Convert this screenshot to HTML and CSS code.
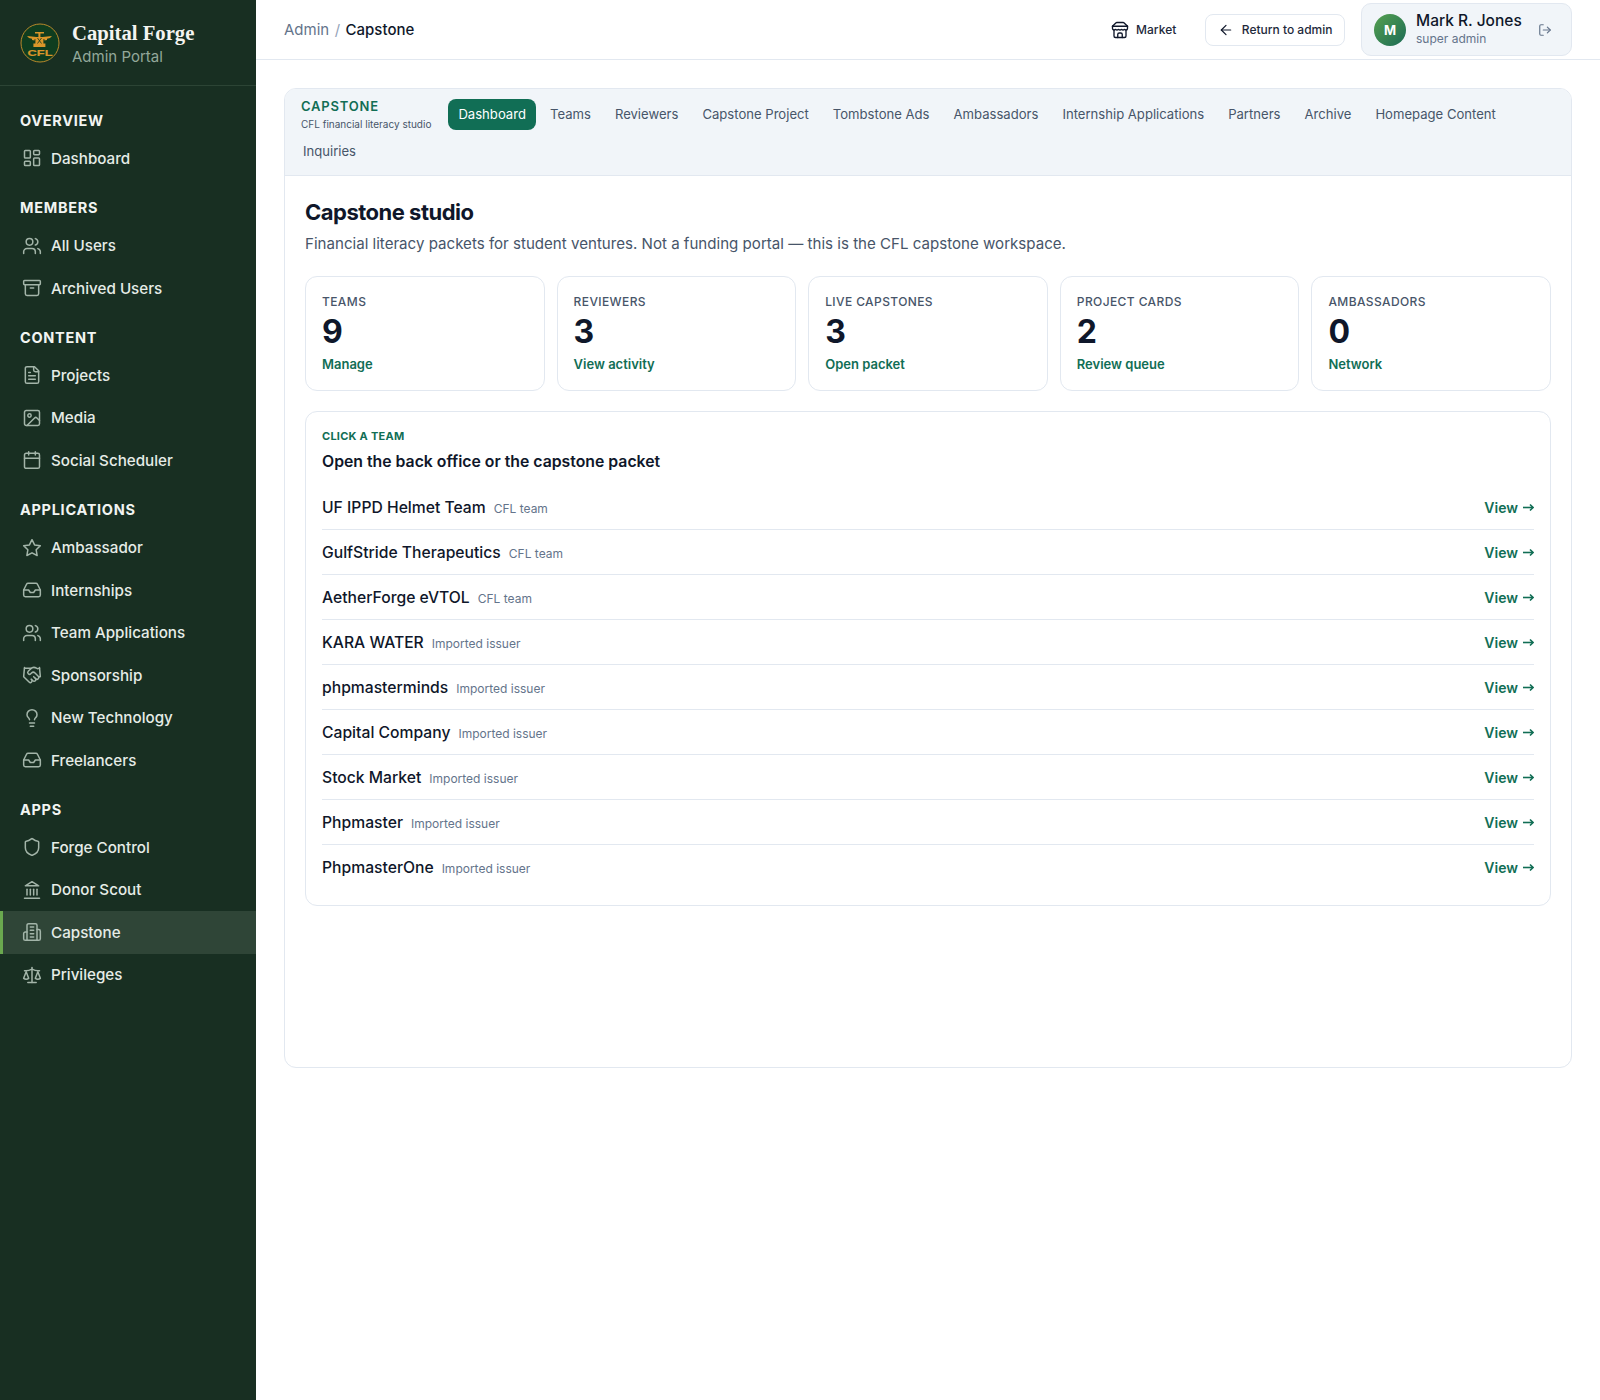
FILE: index.html
```html
<!DOCTYPE html>
<html>
<head>
  <meta charset="utf-8">
  <title>Capstone</title>
  <link rel="stylesheet" href="styles.css">
</head>
<body>
  <svg class="sprites" width="0" height="0">
    <symbol id="i-dash" viewBox="0 0 24 24"><rect x="3" y="3" width="7" height="9" rx="1"/><rect x="14" y="3" width="7" height="5" rx="1"/><rect x="14" y="12" width="7" height="9" rx="1"/><rect x="3" y="16" width="7" height="5" rx="1"/></symbol>
    <symbol id="i-users" viewBox="0 0 24 24"><path d="M16 21v-2a4 4 0 0 0-4-4H6a4 4 0 0 0-4 4v2"/><circle cx="9" cy="7" r="4"/><path d="M22 21v-2a4 4 0 0 0-3-3.87"/><path d="M16 3.13a4 4 0 0 1 0 7.75"/></symbol>
    <symbol id="i-archive" viewBox="0 0 24 24"><rect x="2" y="3" width="20" height="5" rx="1"/><path d="M4 8v11a2 2 0 0 0 2 2h12a2 2 0 0 0 2-2V8"/><path d="M10 12h4"/></symbol>
    <symbol id="i-file" viewBox="0 0 24 24"><path d="M15 2H6a2 2 0 0 0-2 2v16a2 2 0 0 0 2 2h12a2 2 0 0 0 2-2V7Z"/><path d="M14 2v4a2 2 0 0 0 2 2h4"/><path d="M10 9H8"/><path d="M16 13H8"/><path d="M16 17H8"/></symbol>
    <symbol id="i-image" viewBox="0 0 24 24"><rect x="3" y="3" width="18" height="18" rx="2"/><circle cx="9" cy="9" r="2"/><path d="m21 15-3.086-3.086a2 2 0 0 0-2.828 0L6 21"/></symbol>
    <symbol id="i-calendar" viewBox="0 0 24 24"><path d="M8 2v4"/><path d="M16 2v4"/><rect x="3" y="4" width="18" height="18" rx="2"/><path d="M3 10h18"/></symbol>
    <symbol id="i-star" viewBox="0 0 24 24"><polygon points="12 2 15.09 8.26 22 9.27 17 14.14 18.18 21.02 12 17.77 5.82 21.02 7 14.14 2 9.27 8.91 8.26"/></symbol>
    <symbol id="i-inbox" viewBox="0 0 24 24"><polyline points="22 12 16 12 14 15 10 15 8 12 2 12"/><path d="M5.45 5.11 2 12v6a2 2 0 0 0 2 2h16a2 2 0 0 0 2-2v-6l-3.45-6.89A2 2 0 0 0 16.76 4H7.24a2 2 0 0 0-1.79 1.11z"/></symbol>
    <symbol id="i-hands" viewBox="0 0 24 24"><path d="m11 17 2 2a1 1 0 1 0 3-3"/><path d="m14 14 2.5 2.5a1 1 0 1 0 3-3l-3.88-3.88a3 3 0 0 0-4.24 0l-.88.88a1 1 0 1 1-3-3l2.81-2.81a5.79 5.79 0 0 1 7.06-.87l.47.28a2 2 0 0 0 1.42.25L21 4"/><path d="m21 3 1 11h-2"/><path d="M3 3 2 14l6.5 6.5a1 1 0 1 0 3-3"/><path d="M3 4h8"/></symbol>
    <symbol id="i-bulb" viewBox="0 0 24 24"><path d="M15 14c.2-1 .7-1.7 1.5-2.5 1-.9 1.5-2.2 1.5-3.5A6 6 0 0 0 6 8c0 1 .2 2.2 1.5 3.5.7.7 1.3 1.5 1.5 2.5"/><path d="M9 18h6"/><path d="M10 22h4"/></symbol>
    <symbol id="i-shield" viewBox="0 0 24 24"><path d="M20 13c0 5-3.5 7.5-7.66 8.95a1 1 0 0 1-.67-.01C7.5 20.5 4 18 4 13V6a1 1 0 0 1 1-1c2 0 4.5-1.2 6.24-2.72a1.17 1.17 0 0 1 1.52 0C14.51 3.81 17 5 19 5a1 1 0 0 1 1 1z"/></symbol>
    <symbol id="i-bank" viewBox="0 0 24 24"><path d="M3 22h18"/><path d="M6 18v-7"/><path d="M10 18v-7"/><path d="M14 18v-7"/><path d="M18 18v-7"/><path d="M12 2 20 7H4z"/></symbol>
    <symbol id="i-building" viewBox="0 0 24 24"><path d="M6 22V4a2 2 0 0 1 2-2h8a2 2 0 0 1 2 2v18Z"/><path d="M6 12H4a2 2 0 0 0-2 2v6a2 2 0 0 0 2 2h2"/><path d="M18 9h2a2 2 0 0 1 2 2v9a2 2 0 0 1-2 2h-2"/><path d="M10 6h4"/><path d="M10 10h4"/><path d="M10 14h4"/><path d="M10 18h4"/></symbol>
    <symbol id="i-scale" viewBox="0 0 24 24"><path d="m16 16 3-8 3 8c-.87.65-1.92 1-3 1s-2.13-.35-3-1Z"/><path d="m2 16 3-8 3 8c-.87.65-1.92 1-3 1s-2.13-.35-3-1Z"/><path d="M7 21h10"/><path d="M12 3v18"/><path d="M3 7h2c2 0 5-1 7-2 2 1 5 2 7 2h2"/></symbol>
    <symbol id="i-arrow" viewBox="0 0 11 9"><path d="M0 4.5h10"/><path d="M7 1.5l3 3-3 3"/></symbol>
  </svg>

  <div class="shell">
    <aside class="sidebar">
      <div class="brand">
        <svg class="brand-logo" viewBox="0 0 40 40">
          <circle cx="20" cy="20" r="19" fill="#0f3d1f" stroke="#b8892b" stroke-width="1"/>
          <path d="M7 13l9.500 1v2l-2 .2v1.300l-2.500-.5v-1.300l-3-.7zM32 13l-9.500 1v2l2 .2v1.300l2.500-.5v-1.300l3-.7z" fill="#d9962a"/>
          <path d="M15 9h9v1.500h-3.600v3.500h3v6.500h2v3.500h-12v-3.500h2v-6.500h3v-3.500h-3.400z" fill="#d9962a"/>
          <path d="M17.500 15l4 5.500M21.500 15l-4 5.500" stroke="#0f3d1f" stroke-width=".8"/>
          <text x="20" y="33.200" text-anchor="middle" textLength="25" lengthAdjust="spacingAndGlyphs" class="brand-logo-text">CFL</text>
        </svg>
        <div class="brand-text">
          <div class="brand-name">Capital Forge</div>
          <div class="brand-sub">Admin Portal</div>
        </div>
      </div>

      <nav class="side-nav">
        <div class="side-group">
          <h4>OVERVIEW</h4>
          <a class="side-link"><svg class="ico"><use href="#i-dash"/></svg>Dashboard</a>
        </div>
        <div class="side-group">
          <h4>MEMBERS</h4>
          <a class="side-link"><svg class="ico"><use href="#i-users"/></svg>All Users</a>
          <a class="side-link"><svg class="ico"><use href="#i-archive"/></svg>Archived Users</a>
        </div>
        <div class="side-group">
          <h4>CONTENT</h4>
          <a class="side-link"><svg class="ico"><use href="#i-file"/></svg>Projects</a>
          <a class="side-link"><svg class="ico"><use href="#i-image"/></svg>Media</a>
          <a class="side-link"><svg class="ico"><use href="#i-calendar"/></svg>Social Scheduler</a>
        </div>
        <div class="side-group">
          <h4>APPLICATIONS</h4>
          <a class="side-link"><svg class="ico"><use href="#i-star"/></svg>Ambassador</a>
          <a class="side-link"><svg class="ico"><use href="#i-inbox"/></svg>Internships</a>
          <a class="side-link"><svg class="ico"><use href="#i-users"/></svg>Team Applications</a>
          <a class="side-link"><svg class="ico"><use href="#i-hands"/></svg>Sponsorship</a>
          <a class="side-link"><svg class="ico"><use href="#i-bulb"/></svg>New Technology</a>
          <a class="side-link"><svg class="ico"><use href="#i-inbox"/></svg>Freelancers</a>
        </div>
        <div class="side-group">
          <h4>APPS</h4>
          <a class="side-link"><svg class="ico"><use href="#i-shield"/></svg>Forge Control</a>
          <a class="side-link"><svg class="ico"><use href="#i-bank"/></svg>Donor Scout</a>
          <a class="side-link active"><svg class="ico"><use href="#i-building"/></svg>Capstone</a>
          <a class="side-link"><svg class="ico"><use href="#i-scale"/></svg>Privileges</a>
        </div>
      </nav>
    </aside>

    <div class="main">
      <header class="topbar">
        <div class="crumbs"><span>Admin</span><span class="crumb-sep">/</span><b>Capstone</b></div>
        <div class="top-actions">
          <a class="top-link">
            <svg class="ico-store" viewBox="0 0 24 24"><path d="m2 7 4.41-4.41A2 2 0 0 1 7.83 2h8.34a2 2 0 0 1 1.42.59L22 7"/><path d="M4 12v8a2 2 0 0 0 2 2h12a2 2 0 0 0 2-2v-8"/><path d="M15 22v-4a2 2 0 0 0-2-2h-2a2 2 0 0 0-2 2v4"/><path d="M2 7h20"/><path d="M22 7v3a2 2 0 0 1-2 2 2.7 2.7 0 0 1-1.59-.63.7.7 0 0 0-.82 0A2.7 2.7 0 0 1 16 12a2.7 2.7 0 0 1-1.59-.63.7.7 0 0 0-.82 0A2.7 2.7 0 0 1 12 12a2.7 2.7 0 0 1-1.59-.63.7.7 0 0 0-.82 0A2.7 2.7 0 0 1 8 12a2.7 2.7 0 0 1-1.59-.63.7.7 0 0 0-.82 0A2.7 2.7 0 0 1 4 12a2 2 0 0 1-2-2V7"/></svg>
            Market
          </a>
          <a class="return-btn">
            <svg class="ico-sm" viewBox="0 0 24 24"><path d="m12 19-7-7 7-7"/><path d="M19 12H5"/></svg>
            Return to admin
          </a>
          <div class="user-chip">
            <div class="avatar">M</div>
            <div class="user-text">
              <div class="user-name">Mark R. Jones</div>
              <div class="user-role">super admin</div>
            </div>
            <svg class="ico-out" viewBox="0 0 24 24"><path d="M9 21H5a2 2 0 0 1-2-2V5a2 2 0 0 1 2-2h4"/><polyline points="16 17 21 12 16 7"/><line x1="21" y1="12" x2="9" y2="12"/></svg>
          </div>
        </div>
      </header>

      <main class="content">
        <section class="studio">
          <div class="subnav">
            <div class="subnav-title">
              <div class="subnav-name">CAPSTONE</div>
              <div class="subnav-desc">CFL financial literacy studio</div>
            </div>
            <a class="tab current">Dashboard</a>
            <a class="tab">Teams</a>
            <a class="tab">Reviewers</a>
            <a class="tab">Capstone Project</a>
            <a class="tab">Tombstone Ads</a>
            <a class="tab">Ambassadors</a>
            <a class="tab">Internship Applications</a>
            <a class="tab">Partners</a>
            <a class="tab">Archive</a>
            <a class="tab">Homepage Content</a>
            <a class="tab">Inquiries</a>
          </div>

          <div class="studio-body">
            <h1>Capstone studio</h1>
            <p class="lead">Financial literacy packets for student ventures. Not a funding portal — this is the CFL capstone workspace.</p>

            <div class="stats">
              <div class="stat"><div class="stat-label">TEAMS</div><div class="stat-num">9</div><a class="stat-link">Manage</a></div>
              <div class="stat"><div class="stat-label">REVIEWERS</div><div class="stat-num">3</div><a class="stat-link">View activity</a></div>
              <div class="stat"><div class="stat-label">LIVE CAPSTONES</div><div class="stat-num">3</div><a class="stat-link">Open packet</a></div>
              <div class="stat"><div class="stat-label">PROJECT CARDS</div><div class="stat-num">2</div><a class="stat-link">Review queue</a></div>
              <div class="stat"><div class="stat-label">AMBASSADORS</div><div class="stat-num">0</div><a class="stat-link">Network</a></div>
            </div>

            <div class="teams">
              <div class="teams-kicker">CLICK A TEAM</div>
              <h2>Open the back office or the capstone packet</h2>
              <ul class="team-list">
                <li><span class="team-name">UF IPPD Helmet Team</span><span class="team-type">CFL team</span><a class="team-view">View<svg class="arrow"><use href="#i-arrow"/></svg></a></li>
                <li><span class="team-name">GulfStride Therapeutics</span><span class="team-type">CFL team</span><a class="team-view">View<svg class="arrow"><use href="#i-arrow"/></svg></a></li>
                <li><span class="team-name">AetherForge eVTOL</span><span class="team-type">CFL team</span><a class="team-view">View<svg class="arrow"><use href="#i-arrow"/></svg></a></li>
                <li><span class="team-name">KARA WATER</span><span class="team-type">Imported issuer</span><a class="team-view">View<svg class="arrow"><use href="#i-arrow"/></svg></a></li>
                <li><span class="team-name">phpmasterminds</span><span class="team-type">Imported issuer</span><a class="team-view">View<svg class="arrow"><use href="#i-arrow"/></svg></a></li>
                <li><span class="team-name">Capital Company</span><span class="team-type">Imported issuer</span><a class="team-view">View<svg class="arrow"><use href="#i-arrow"/></svg></a></li>
                <li><span class="team-name">Stock Market</span><span class="team-type">Imported issuer</span><a class="team-view">View<svg class="arrow"><use href="#i-arrow"/></svg></a></li>
                <li><span class="team-name">Phpmaster</span><span class="team-type">Imported issuer</span><a class="team-view">View<svg class="arrow"><use href="#i-arrow"/></svg></a></li>
                <li><span class="team-name">PhpmasterOne</span><span class="team-type">Imported issuer</span><a class="team-view">View<svg class="arrow"><use href="#i-arrow"/></svg></a></li>
              </ul>
            </div>
          </div>
        </section>
      </main>
    </div>
  </div>
</body>
</html>
```

FILE: styles.css
```css
* {
  box-sizing: border-box;
}
body {
  margin: 0;
  font-family: Inter, "Liberation Sans", sans-serif;
  color: #0f172a;
  background: #fff;
}
h1, h2, h4, p, ul {
  margin: 0;
  padding: 0;
}
.sprites {
  position: absolute;
}
.shell {
  display: flex;
  min-height: 1400px;
}

/* sidebar */
.sidebar {
  width: 256px;
  flex: none;
  background: #182f22;
  color: #e8eee9;
}
.brand {
  height: 86px;
  display: flex;
  align-items: center;
  gap: 12px;
  padding: 0 20px;
  border-bottom: 1px solid #2c4435;
}
.brand-logo {
  width: 40px;
  height: 40px;
  flex: none;
}
.brand-logo-text {
  font: 700 9.5px "Liberation Sans", sans-serif;
  fill: #d9962a;
  stroke: #d9962a;
  stroke-width: .2;
}
.brand-text {
  margin-top: 2px;
}
.brand-name {
  font-family: "Liberation Serif", serif;
  font-weight: 700;
  font-size: 20.7px;
  line-height: 26px;
  color: #f4f4f0;
}
.brand-sub {
  margin-top: 1px;
  font-size: 15px;
  line-height: 20px;
  color: #93a89a;
}
.side-nav {
  padding-top: 20.5px;
}
.side-group {
  margin-bottom: 14.3px;
}
.side-group h4 {
  margin-bottom: 2.5px;
  padding: 0 20px;
  font-size: 14.5px;
  line-height: 28px;
  font-weight: 700;
  letter-spacing: .7px;
  color: #f2f5f2;
}
.side-link {
  display: flex;
  align-items: center;
  gap: 9px;
  height: 42.5px;
  padding-left: 22px;
  font-size: 15.2px;
  font-weight: 500;
  color: #e6ece7;
}
.side-link.active {
  background: #2f4537;
  border-left: 3px solid #6aa84f;
  padding-left: 19px;
}
.ico {
  width: 20px;
  height: 20px;
  flex: none;
  fill: none;
  stroke: #a3b5a9;
  stroke-width: 1.8;
  stroke-linecap: round;
  stroke-linejoin: round;
}

/* top bar */
.main {
  flex: 1;
  min-width: 0;
}
.topbar {
  height: 60px;
  display: flex;
  align-items: center;
  justify-content: space-between;
  padding: 0 28px;
  border-bottom: 1px solid #e2e8f0;
}
.crumbs {
  display: flex;
  gap: 5.5px;
  font-size: 15px;
  color: #64748b;
}
.crumbs b {
  font-weight: 500;
  color: #0f172a;
}
.crumb-sep {
  color: #94a3b8;
}
.top-actions {
  display: flex;
  align-items: center;
}
.top-link {
  display: flex;
  align-items: center;
  gap: 7px;
  font-size: 12px;
  font-weight: 500;
  color: #1e293b;
  margin-right: 29px;
}
.ico-sm, .ico-store {
  width: 16px;
  height: 16px;
  fill: none;
  stroke: #0f172a;
  stroke-width: 1.8;
  stroke-linecap: round;
  stroke-linejoin: round;
}
.ico-store {
  width: 18px;
  height: 18px;
}
.return-btn {
  display: flex;
  align-items: center;
  gap: 8px;
  height: 32px;
  padding: 0 11.5px;
  font-size: 12px;
  font-weight: 500;
  color: #1e293b;
  border: 1px solid #e2e8f0;
  border-radius: 8px;
  margin-right: 16px;
}
.user-chip {
  display: flex;
  align-items: center;
  width: 211px;
  height: 53px;
  padding: 0 12px;
  background: #f1f5f9;
  border: 1px solid #e2e8f0;
  border-radius: 10px;
}
.avatar {
  width: 32px;
  height: 32px;
  flex: none;
  display: flex;
  align-items: center;
  justify-content: center;
  border-radius: 50%;
  background: linear-gradient(135deg, #55a04f, #1c6b55);
  color: #fff;
  font-size: 13px;
  font-weight: 700;
}
.user-text {
  margin-left: 10px;
  margin-bottom: 2px;
  flex: 1;
}
.user-name {
  font-size: 15.5px;
  line-height: 19px;
  font-weight: 500;
  color: #0f172a;
}
.user-role {
  font-size: 12px;
  line-height: 17px;
  color: #64748b;
}
.ico-out {
  width: 14px;
  height: 14px;
  margin-right: 7px;
  fill: none;
  stroke: #64748b;
  stroke-width: 2;
  stroke-linecap: round;
  stroke-linejoin: round;
}

/* capstone card */
.content {
  padding: 28px;
}
.studio {
  height: 980px;
  border: 1px solid #e2e8f0;
  border-radius: 12px;
  overflow: hidden;
}
.subnav {
  display: flex;
  flex-wrap: wrap;
  align-items: center;
  row-gap: 5px;
  column-gap: 4px;
  padding: 8px 16px;
  background: #f1f5f9;
  border-bottom: 1px solid #e2e8f0;
}
.subnav-title {
  margin-right: 13px;
}
.subnav-name {
  font-size: 13px;
  line-height: 19px;
  font-weight: 600;
  letter-spacing: .8px;
  color: #116e55;
}
.subnav-desc {
  padding-top: 1px;
  font-size: 10px;
  line-height: 14px;
  color: #475569;
}
.tab {
  padding: 0 10px;
  height: 31px;
  line-height: 31px;
  font-size: 13.1px;
  color: #475569;
  border-radius: 8px;
}
.tab:last-child {
  padding-left: 2px;
}
.tab.current {
  background: #116e55;
  color: #fff;
}
.studio-body {
  padding: 22px 20px;
}
h1 {
  font-size: 22px;
  line-height: 28px;
  font-weight: 700;
  letter-spacing: -.5px;
}
.lead {
  margin-top: 6px;
  font-size: 15.1px;
  line-height: 24px;
  color: #475569;
}
.stats {
  display: grid;
  grid-template-columns: repeat(5, 1fr);
  gap: 12px;
  margin-top: 20px;
}
.stat {
  height: 115px;
  padding: 17px 16px;
  border: 1px solid #e2e8f0;
  border-radius: 12px;
}
.stat-label {
  font-size: 12px;
  line-height: 16px;
  font-weight: 500;
  letter-spacing: .4px;
  color: #475569;
}
.stat-num {
  margin-top: 3px;
  font-size: 32px;
  line-height: 38px;
  font-weight: 700;
}
.stat-link {
  display: block;
  margin-top: 3px;
  font-size: 13px;
  line-height: 20px;
  font-weight: 600;
  color: #116e55;
}
.teams {
  margin-top: 20px;
  height: 495px;
  padding: 16px;
  border: 1px solid #e2e8f0;
  border-radius: 12px;
}
.teams-kicker {
  font-size: 11px;
  line-height: 16px;
  font-weight: 700;
  letter-spacing: .25px;
  color: #116e55;
}
h2 {
  margin-top: 6px;
  font-size: 15.8px;
  line-height: 24px;
  font-weight: 600;
  color: #0f172a;
}
.team-list {
  list-style: none;
  margin-top: 11px;
}
.team-list li {
  display: flex;
  align-items: baseline;
  height: 45px;
  padding-top: 13px;
  border-bottom: 1px solid #e2e8f0;
}
.team-list li:last-child {
  border-bottom: 0;
}
.team-name {
  font-size: 15.7px;
  font-weight: 450;
  color: #0f172a;
}
.team-type {
  margin-left: 8px;
  font-size: 12px;
  color: #64748b;
}
.team-view {
  display: inline-flex;
  align-items: center;
  gap: 5px;
  margin-left: auto;
  font-size: 14px;
  font-weight: 600;
  color: #116e55;
}
.arrow {
  width: 11px;
  height: 9px;
  fill: none;
  stroke: #116e55;
  stroke-width: 1.6;
}
```
